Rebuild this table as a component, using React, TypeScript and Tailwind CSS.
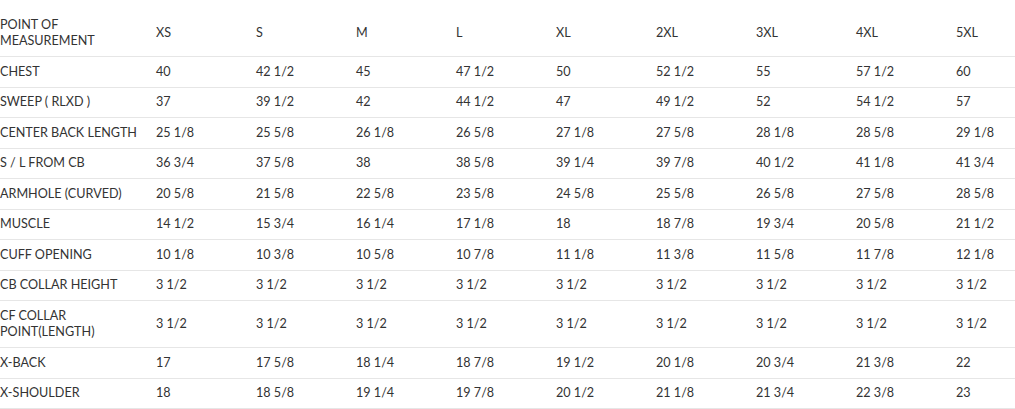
const sizes = ["XS", "S", "M", "L", "XL", "2XL", "3XL", "4XL", "5XL"];

const rows: [string, string[]][] = [
  ["CHEST", ["40", "42 1/2", "45", "47 1/2", "50", "52 1/2", "55", "57 1/2", "60"]],
  ["SWEEP ( RLXD )", ["37", "39 1/2", "42", "44 1/2", "47", "49 1/2", "52", "54 1/2", "57"]],
  ["CENTER BACK LENGTH", ["25 1/8", "25 5/8", "26 1/8", "26 5/8", "27 1/8", "27 5/8", "28 1/8", "28 5/8", "29 1/8"]],
  ["S / L FROM CB", ["36 3/4", "37 5/8", "38", "38 5/8", "39 1/4", "39 7/8", "40 1/2", "41 1/8", "41 3/4"]],
  ["ARMHOLE (CURVED)", ["20 5/8", "21 5/8", "22 5/8", "23 5/8", "24 5/8", "25 5/8", "26 5/8", "27 5/8", "28 5/8"]],
  ["MUSCLE", ["14 1/2", "15 3/4", "16 1/4", "17 1/8", "18", "18 7/8", "19 3/4", "20 5/8", "21 1/2"]],
  ["CUFF OPENING", ["10 1/8", "10 3/8", "10 5/8", "10 7/8", "11 1/8", "11 3/8", "11 5/8", "11 7/8", "12 1/8"]],
  ["CB COLLAR HEIGHT", Array(9).fill("3 1/2")],
  ["CF COLLAR POINT(LENGTH)", Array(9).fill("3 1/2")],
  ["X-BACK", ["17", "17 5/8", "18 1/4", "18 7/8", "19 1/2", "20 1/8", "20 3/4", "21 3/8", "22"]],
  ["X-SHOULDER", ["18", "18 5/8", "19 1/4", "19 7/8", "20 1/2", "21 1/8", "21 3/4", "22 3/8", "23"]],
];

const cell = "py-[6.5px] pr-[10px] text-left align-middle font-normal";

export default function App() {
  return (
    <div className="w-[1015px] h-[409px] overflow-hidden bg-white pt-[10px] text-[#333] text-[12.6px] leading-[16.5px] font-['Lato',sans-serif]">
      <table className="w-[1056px] table-fixed border-collapse">
        <colgroup>
          <col className="w-[156px]" />
          {sizes.map((s) => (
            <col key={s} className="w-[100px]" />
          ))}
        </colgroup>
        <thead>
          <tr className="border-b border-[#e6e6e6]">
            <th className={cell}>POINT OF MEASUREMENT</th>
            {sizes.map((s) => (
              <th key={s} className={cell}>
                {s}
              </th>
            ))}
          </tr>
        </thead>
        <tbody>
          {rows.map(([label, vals]) => (
            <tr key={label} className="border-b border-[#e6e6e6]">
              <td className={cell}>{label}</td>
              {vals.map((v, i) => (
                <td key={i} className={cell}>
                  {v}
                </td>
              ))}
            </tr>
          ))}
        </tbody>
      </table>
    </div>
  );
}
